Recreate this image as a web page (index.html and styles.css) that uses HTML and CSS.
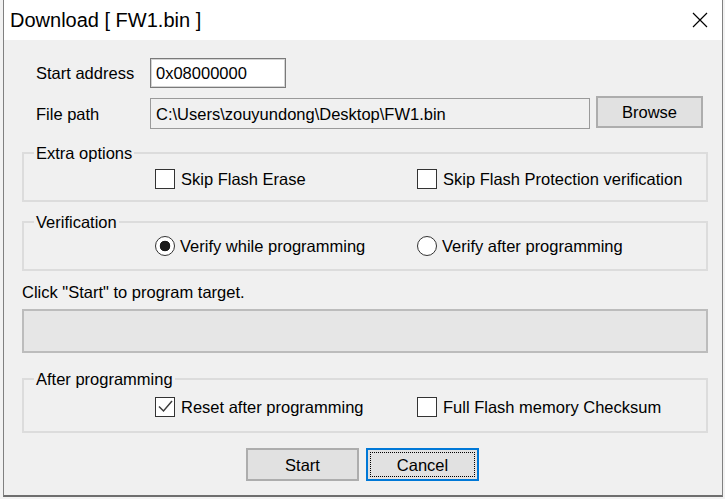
FILE: index.html
```html
<!DOCTYPE html>
<html>
<head>
<meta charset="utf-8">
<link rel="stylesheet" href="styles.css">
</head>
<body>
<div class="window">
  <div class="titlebar">
    <span class="title">Download [ FW1.bin ]</span>
    <svg class="close" width="16" height="16" viewBox="0 0 16 16"><path d="M1 1L15 15M15 1L1 15" stroke="#000" stroke-width="1.2" fill="none"/></svg>
  </div>
  <div class="content">
    <div class="row row-addr">
      <span class="lbl">Start address</span>
      <div class="field field-addr">0x08000000</div>
    </div>
    <div class="row row-path">
      <span class="lbl lbl-path">File path</span>
      <div class="field field-path">C:\Users\zouyundong\Desktop\FW1.bin</div>
      <div class="btn btn-browse">Browse</div>
    </div>
    <fieldset class="group g1">
      <legend>Extra options</legend>
      <div class="opts">
        <span class="opt"><span class="cb"></span>Skip Flash Erase</span>
        <span class="opt"><span class="cb"></span>Skip Flash Protection verification</span>
      </div>
    </fieldset>
    <fieldset class="group g2">
      <legend>Verification</legend>
      <div class="opts">
        <span class="opt"><span class="rb rb-on"></span>Verify while programming</span>
        <span class="opt"><span class="rb"></span>Verify after programming</span>
      </div>
    </fieldset>
    <div class="status">Click "Start" to program target.</div>
    <div class="progress"></div>
    <fieldset class="group g3">
      <legend>After programming</legend>
      <div class="opts">
        <span class="opt"><span class="cb"><svg width="18" height="18" viewBox="0 0 18 18"><path d="M3 8.5L7.5 13L16 3" fill="none" stroke="#3c3c3c" stroke-width="1.5"/></svg></span>Reset after programming</span>
        <span class="opt"><span class="cb"></span>Full Flash memory Checksum</span>
      </div>
    </fieldset>
    <div class="buttons">
      <div class="btn btn-action">Start</div>
      <div class="btn btn-action btn-default">Cancel</div>
    </div>
  </div>
</div>
</body>
</html>
```
FILE: styles.css
```css
body {
  margin: 0;
  background: #f2f2f2;
  font-family: "Liberation Sans", Arial, sans-serif;
  font-size: 16.5px;
  color: #000;
}

.window {
  margin-left: 3px;
  width: 720px;
  height: 497px;
  box-sizing: border-box;
  border: 1px solid #808080;
  border-top: none;
  border-bottom: 2px solid #6e6e6e;
  background: #f0f0f0;
  display: flex;
  flex-direction: column;
}

.titlebar {
  flex: none;
  height: 40px;
  background: #fff;
  display: flex;
  align-items: center;
  justify-content: space-between;
  padding: 0 14px 0 6px;
}

.title {
  font-family: "Liberation Sans", Arial, sans-serif;
  font-size: 20px;
}

.close {
  display: block;
}

.content {
  padding: 18px 14px 0 18px;
}

.row {
  display: flex;
}

.row-addr {
  height: 30px;
  align-items: center;
}

.row-path {
  margin-top: 8px;
  height: 33px;
  align-items: flex-start;
}

.lbl {
  width: 114px;
  margin-left: 14px;
  line-height: 20px;
  white-space: nowrap;
}

.lbl-path {
  padding-top: 8px;
}

.field {
  box-sizing: border-box;
  border: 1px solid #7a7a7a;
  box-shadow: inset 0 0 0 1px #d4d4d4;
  padding-left: 5px;
  display: flex;
  align-items: center;
  background: #fff;
  line-height: 20px;
  white-space: nowrap;
}

.field-addr {
  width: 136px;
  height: 30px;
}

.field-path {
  width: 440px;
  height: 31px;
  margin-top: 2px;
  background: #f0f0f0;
  box-shadow: none;
  border-color: #9a9a9a;
}

.btn {
  box-sizing: border-box;
  background: #e1e1e1;
  border: 2px solid #adadad;
  display: flex;
  align-items: center;
  justify-content: center;
  line-height: 20px;
}

.btn-browse {
  margin-left: 6px;
  width: 107px;
  height: 32px;
}

.group {
  margin: 0;
  padding: 0;
  border: 2px solid #dcdcdc;
  min-inline-size: 0;
}

.group legend {
  margin-left: 10px;
  padding: 0 2px;
  line-height: 20px;
}

.opts {
  display: grid;
  grid-template-columns: 262px auto;
  padding-left: 131px;
}

.g1 { margin-top: 14px; }
.g1 .opts { padding-top: 6px; padding-bottom: 11px; }

.g2 { margin-top: 10px; }
.g2 .opts { padding-top: 4px; padding-bottom: 13px; }

.g3 { margin-top: 16px; }
.g3 .opts { padding-top: 8px; padding-bottom: 14px; }

.opt {
  display: flex;
  align-items: center;
  height: 20px;
  line-height: 20px;
  white-space: nowrap;
}

.cb {
  flex: none;
  width: 20px;
  height: 20px;
  box-sizing: border-box;
  border: 1px solid #333;
  background: #fff;
  margin-right: 6px;
}

.cb svg {
  display: block;
}

.rb {
  flex: none;
  width: 20px;
  height: 20px;
  box-sizing: border-box;
  border: 1.5px solid #333;
  border-radius: 50%;
  background: #fff;
  margin-right: 5px;
}

.rb-on {
  background: radial-gradient(circle, #1a1a1a 0 5px, #fff 5.6px);
}

.status {
  margin-top: 11px;
  line-height: 20px;
}

.progress {
  margin-top: 7px;
  height: 44px;
  box-sizing: border-box;
  background: #e6e6e6;
  border: 2px solid #bcbcbc;
}

.buttons {
  margin-top: 15px;
  display: flex;
  gap: 7px;
  padding-left: 224px;
}

.btn-action {
  width: 113px;
  height: 33px;
}

.btn-default {
  border-color: #0078d7;
  outline: 1px dotted #000;
  outline-offset: -5px;
}
```
